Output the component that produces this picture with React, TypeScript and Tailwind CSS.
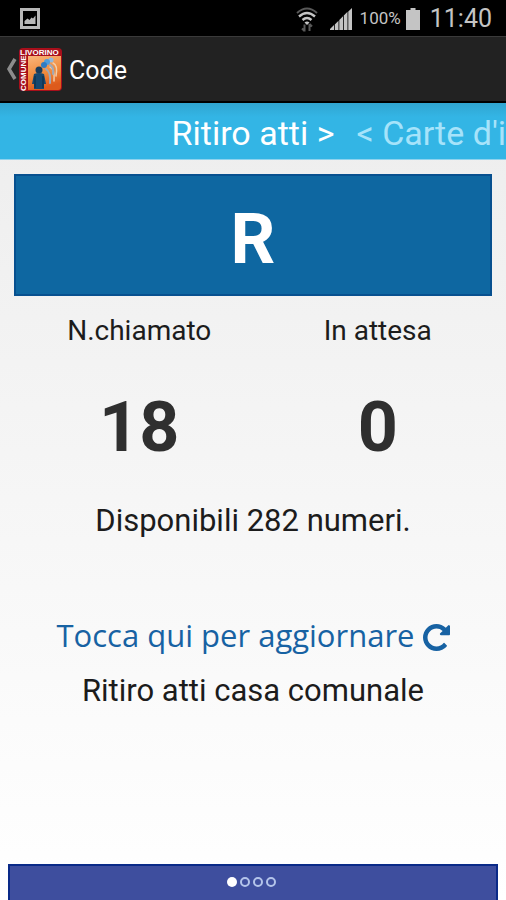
import { useState } from 'react';
import type React from 'react';

const QUEUES = [
  { letter: 'R', title: 'Ritiro atti', called: 18, waiting: 0, available: 282, description: 'Ritiro atti casa comunale' },
  { letter: 'C', title: "Carte d'identità", called: 0, waiting: 0, available: 0, description: "Carte d'identità" },
  { letter: 'A', title: 'Anagrafe', called: 0, waiting: 0, available: 0, description: 'Anagrafe' },
  { letter: 'S', title: 'Stato civile', called: 0, waiting: 0, available: 0, description: 'Stato civile' },
];

const StatusBar: React.FC = () => (
  <div className="flex h-9 items-center justify-between bg-black pr-[14px] pl-5 text-[#c4c4c4]">
    <svg width="20" height="21" viewBox="0 0 20 21" className="text-[#b8b8b8]">
      <path fill="currentColor" fillRule="evenodd" d="M0 0h20v21H0zM3 3v15h14V3z" />
      <path fill="currentColor" d="M4.500 16v-3l3-2.500 2 1.500 2-2.500 1.500 1 2.500-3V16z" />
    </svg>
    <div className="flex items-center pt-[2px]">
      <svg width="22" height="25" viewBox="0 0 22 25" fill="none" stroke="currentColor" className="mr-3">
        <path strokeWidth="2" opacity="0.45" d="M1 6Q11-3 21 6" />
        <path strokeWidth="2.400" d="M3 9.500Q11 2.500 19 9.500" />
        <path strokeWidth="2.400" d="M6.500 13Q11 9 15.500 13" />
        <path fill="currentColor" stroke="none" d="M8.500 15.500Q11 13.500 13.500 15.500L11 18z" />
        <path strokeWidth="2" opacity="0.45" d="M8.500 24.500v-7M6 21.500l2.500 2.500M13.500 24v-7M16 19.500L13.500 17" />
      </svg>
      <svg width="22" height="22" viewBox="0 0 22 22" fill="currentColor" className="mr-2">
        <path d="M0 22v-1l4-4v5zM4.800 22v-5.500l3.700-3.700V22zM9.300 22V12l3.700-3.700V22zM13.800 22V7.500l3.700-3.700V22zM18.300 22V3.500L22 0v22z" />
      </svg>
      <span className="mr-[5px] font-[Roboto] text-[17px]">100%</span>
      <svg width="14" height="22" viewBox="0 0 14 22" fill="currentColor" className="mr-[10px]">
        <path d="M4.500 0h5v2H14v20H0V2h4.500z" />
      </svg>
      <span className="font-[Roboto] text-[25px] leading-8">11:40</span>
    </div>
  </div>
);

const AppIcon: React.FC = () => (
  <svg width="45" height="45" viewBox="0 0 45 45">
    <defs>
      <linearGradient id="tile" x1="0" y1="0" x2="0.3" y2="1">
        <stop offset="0" stopColor="#f9b67c" />
        <stop offset="0.6" stopColor="#f08a3c" />
        <stop offset="1" stopColor="#dd5a1c" />
      </linearGradient>
    </defs>
    <rect x="1" y="1" width="43" height="43" rx="4" fill="#a80f1b" />
    <path d="M10 9h33v31q0 3-3 3H10z" fill="url(#tile)" />
    <text x="2" y="8" fontFamily="Liberation Sans" fontWeight="bold" fontSize="8" fill="#fff">
      LIVORINO
    </text>
    <text transform="translate(8 44) rotate(-90)" fontFamily="Liberation Sans" fontWeight="bold" fontSize="8" fill="#fff">
      COMUNE
    </text>
    <g fill="none" strokeLinecap="round">
      <path stroke="#f3cda8" strokeWidth="1.500" d="M35 16q5 2 3 13M32 20q5 2 4 14" />
      <path stroke="#9fa9b8" strokeWidth="2" d="M32 18q4 2 3 9M28 22q5 3 4 14" />
    </g>
    <circle cx="33" cy="13" r="2.500" fill="#8fb8de" />
    <circle cx="29" cy="15" r="3" fill="#4f9ddd" />
    <circle cx="26" cy="18" r="3" fill="#2f7cc4" />
    <circle cx="21" cy="23" r="3.500" fill="#173b5c" />
    <path d="M16 27q5-2 10 0l2 10h-2v5h-10v-5h-2z" fill="#17486f" />
    <path d="M17 29v12M25 29v12" stroke="#0c2a43" />
  </svg>
);

const RefreshIcon: React.FC = () => (
  <svg width="27" height="27" viewBox="0 128 1536 1536" fill="currentColor" className="mt-1">
    <path d="M1536 256v448q0 26-19 45t-45 19h-448q-42 0-59-40-17-39 14-69l138-138q-148-137-349-137-104 0-198.500 40.500t-163.500 109.500-109.500 163.500-40.500 198.500 40.500 198.500 109.500 163.500 163.500 109.500 198.500 40.500q119 0 225-52t179-147q7-10 23-12 15 0 25 9l137 138q9 8 9.500 20.500t-7.500 22.500q-109 132-264 204.500t-327 72.500q-156 0-298-61t-245-164-164-245-61-298 61-298 164-245 245-164 298-61q147 0 284.500 55.500t244.500 156.500l130-129q29-31 70-14 39 17 39 59z" />
  </svg>
);

const App: React.FC = () => {
  const [current, setCurrent] = useState(0);
  const queue = QUEUES[current];
  const next = QUEUES[current + 1];

  return (
    <div className="flex min-h-screen flex-col overflow-hidden bg-linear-to-b from-[#ebebeb] to-white font-[Roboto,sans-serif] text-[#1c1c1c]">
      <StatusBar />

      <header className="flex h-[67px] items-center border-t border-b-2 border-t-[#3a3a3a] border-b-black bg-[#222222]">
        <button type="button" aria-label="Indietro" className="flex items-center pl-[6px]">
          <svg width="12" height="24" viewBox="0 0 12 24" fill="none" stroke="#8c8c8c" strokeWidth="3.500">
            <path d="M9 2L3 12l6 10" />
          </svg>
          <AppIcon />
        </button>
        <h1 className="pt-[3px] pl-[6px] text-[25px] text-white">Code</h1>
      </header>

      <nav className="grid h-[57px] grid-cols-[1fr_auto_1fr] items-center border-b border-[#8fd3ee] bg-linear-to-b from-[#30a5d0] to-[#33b5e5] to-25% pt-1 text-[34px] whitespace-nowrap">
        <span />
        <span className="text-white">{queue.title} &gt;</span>
        {next && (
          <button type="button" onClick={() => setCurrent(current + 1)} className="min-w-0 pl-[22px] text-left text-[#a6e3fa]">
            &lt; {next.title}
          </button>
        )}
      </nav>

      <main className="flex flex-1 flex-col px-[14px] pt-[14px] text-center text-[31px] leading-10">
        <div className="flex h-[122px] items-center justify-center border-2 border-[#07508f] bg-[#0e67a1] pt-2 text-[70px] font-bold text-white">
          {queue.letter}
        </div>

        <dl className="-mr-[5px] ml-[6px] grid grid-cols-2 pt-[15px]">
          <div>
            <dt className="text-[28px]">N.chiamato</dt>
            <dd className="pt-10 text-[70px] leading-[72px] font-bold text-[#2f2f2f]">{queue.called}</dd>
          </div>
          <div>
            <dt className="text-[28px]">In attesa</dt>
            <dd className="pt-10 text-[70px] leading-[72px] font-bold text-[#2f2f2f]">{queue.waiting}</dd>
          </div>
        </dl>

        <p className="pt-[38px]">Disponibili {queue.available} numeri.</p>

        <button
          type="button"
          className="mt-[74px] flex items-center justify-center gap-2 font-['Open_Sans'] text-[31px] whitespace-nowrap text-[#1762a3]">
          Tocca qui per aggiornare
          <RefreshIcon />
        </button>
        <p className="pt-4">{queue.description}</p>
      </main>

      <footer className="mx-2 flex h-9 items-center justify-center gap-[3px] border-2 border-b-0 border-[#0a2a88] bg-[#3e4e9e] pr-1 pb-[2px]">
        {QUEUES.map((item, index) => (
          <button
            key={item.letter}
            type="button"
            aria-label={item.title}
            onClick={() => setCurrent(index)}
            className={
              index === current
                ? 'size-[10px] rounded-full bg-white'
                : 'size-[10px] rounded-full border-2 border-[#b4c4ea]'
            }
          />
        ))}
      </footer>
    </div>
  );
};

export default App;
